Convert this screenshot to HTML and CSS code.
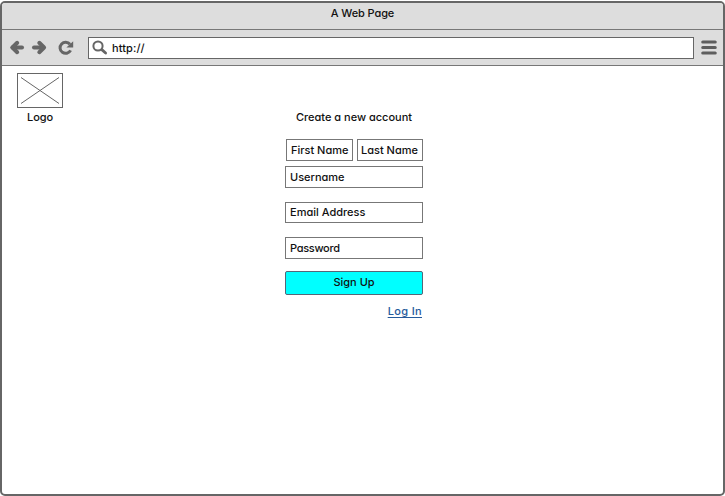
FILE: index.html
```html
<!DOCTYPE html>
<html lang="en">
<head>
<meta charset="utf-8">
<title>A Web Page</title>
<link rel="stylesheet" href="styles.css">
</head>
<body>
<div class="window">
  <header class="titlebar"><span class="t-title">A Web Page</span></header>
  <nav class="toolbar">
    <svg class="nav-icons" width="80" height="35" viewBox="2 30 80 35">
      <g fill="none" stroke="#666" stroke-width="4">
        <path d="M12.5 47.5H22" stroke-linecap="round"/>
        <path d="M17.2 42.8L12.4 47.5L17.2 52.2" stroke-linecap="round" stroke-linejoin="round"/>
        <path d="M34 47.5H43" stroke-linecap="round"/>
        <path d="M39.3 42.8L44.1 47.5L39.3 52.2" stroke-linecap="round" stroke-linejoin="round"/>
        <path d="M70 44.2A5.6 5.6 0 1 0 70.6 50.4" stroke-width="3"/>
      </g>
      <path d="M73.2 41.2V47.6H66.4Z" fill="#666"/>
    </svg>
    <div class="address">
      <svg width="18" height="19" viewBox="91 38 18 19" fill="none" stroke="#666">
        <circle cx="98" cy="46" r="4.6" stroke-width="2"/>
        <path d="M101.8 49.6L105.6 53" stroke-width="2.8" stroke-linecap="round"/>
      </svg>
      <span class="t-url">http://</span>
    </div>
    <svg class="menu" width="16" height="15" viewBox="0 0 16 15" stroke="#5e5e5e" stroke-width="3.2" stroke-linecap="round">
      <path d="M1.8 2H14.2M1.8 7.5H14.2M1.8 13H14.2"/>
    </svg>
  </nav>
  <main class="page">
    <div class="logo">
      <svg width="46" height="35" viewBox="0 0 46 35" fill="none" stroke="#666">
        <rect x=".5" y=".5" width="45" height="34"/>
        <path d="M4 4.5L42 30.5M42 4.5L4 30.5"/>
      </svg>
      <span class="t-logo">Logo</span>
    </div>
    <form class="signup">
      <h1 class="t-heading">Create a new account</h1>
      <div class="names">
        <div class="field"><span class="t-first">First Name</span></div>
        <div class="field last"><span class="t-last">Last Name</span></div>
      </div>
      <div class="field username"><span class="t-user">Username</span></div>
      <div class="field email"><span class="t-email">Email Address</span></div>
      <div class="field password"><span class="t-pass">Password</span></div>
      <button class="submit" type="button"><span class="t-submit">Sign Up</span></button>
      <a class="login" href="#">Log In</a>
    </form>
  </main>
</div>
</body>
</html>
```
FILE: styles.css
```css
* { box-sizing: border-box; }
body {
  margin: 0;
  padding-top: 1px;
  height: 496px;
  overflow: hidden;
  background: #fff;
  color: #111;
  font: 500 11px/14px Inter, "Liberation Sans", sans-serif;
  font-feature-settings: "cv11";
  white-space: nowrap;
}
.window {
  width: 725px;
  height: 495px;
  border: 2px solid #666;
  border-radius: 5px;
  overflow: hidden;
}
.titlebar {
  height: 27px;
  padding-top: 3px;
  background: #ddd;
  border-bottom: 1px solid #777;
  text-align: center;
}
.t-title { letter-spacing: -0.1px; }
.toolbar {
  display: flex;
  align-items: center;
  height: 36px;
  background: #ddd;
  border-bottom: 1px solid #777;
}
.nav-icons { margin-right: 6px; }
.address {
  display: flex;
  align-items: center;
  width: 606px;
  height: 22px;
  padding-left: 2px;
  background: #fff;
  border: 1px solid #666;
}
.t-url { margin-left: 3px; letter-spacing: 0.1px; }
.menu { margin-left: 7px; }
.page {
  display: flex;
  align-items: flex-start;
  padding: 7px 0 0 15px;
}
.logo {
  display: flex;
  flex-direction: column;
  align-items: center;
  width: 46px;
}
.t-logo { margin-top: 2px; letter-spacing: -0.1px; }
.signup {
  display: flex;
  flex-direction: column;
  width: 138px;
  margin: 37px 0 0 222px;
}
.t-heading {
  margin: 0 0 15px;
  font-size: inherit;
  font-weight: inherit;
  text-align: center;
}
.names {
  display: grid;
  grid-template-columns: 67px 66px;
  gap: 4px;
  padding-left: 1px;
}
.field {
  height: 22px;
  padding: 3px 0 0 4px;
  background: #fff;
  border: 1px solid #777;
}
.last { padding-left: 3px; }
.username { margin-top: 5px; }
.email { margin-top: 14px; height: 21px; padding-top: 2px; }
.password { margin-top: 14px; }
.t-pass { letter-spacing: -0.3px; }
.submit {
  height: 24px;
  margin-top: 12px;
  padding: 0 0 2px;
  border: 1px solid #567;
  border-radius: 2px;
  background: #0ff;
  color: #111;
  font: inherit;
  font-feature-settings: inherit;
}
.login {
  align-self: flex-end;
  margin: 9px 1px 0 0;
  color: #255a9b;
  letter-spacing: 0.35px;
  text-decoration: underline;
  text-underline-offset: 2px;
}
```
